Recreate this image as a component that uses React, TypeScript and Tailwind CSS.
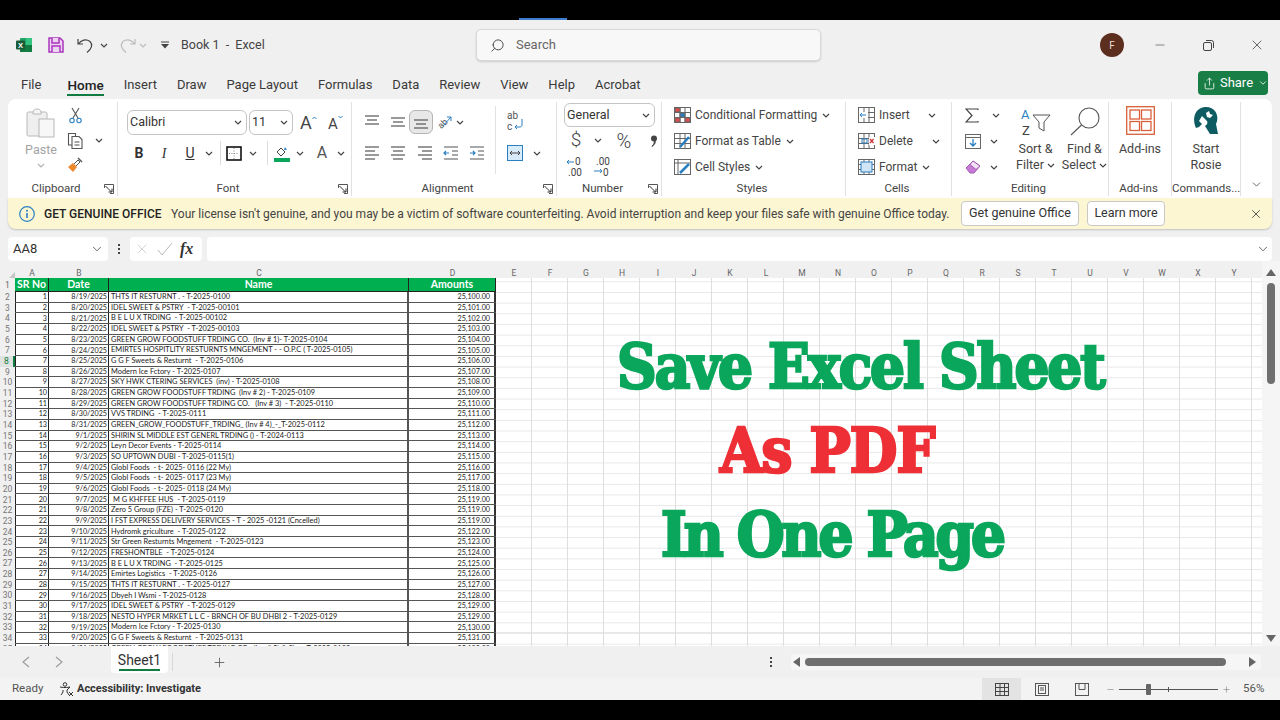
import type { ReactNode } from 'react';
import { ChevronDown, Minus, Plus, Search, Share, X } from 'lucide-react';

const TABS = ['Insert', 'Draw', 'Page Layout', 'Formulas', 'Data', 'Review', 'View', 'Help', 'Acrobat'];
const COLS = 'EFGHIJKLMNOPQRSTUVWXY'.split('');

const NAMES = [
  'THTS IT RESTURNT . - T-2025-0100',
  'IDEL SWEET & PSTRY  - T-2025-00101',
  'B E L U X TRDING  - T-2025-00102',
  'IDEL SWEET & PSTRY  - T-2025-00103',
  'GREEN GROW FOODSTUFF TRDING CO.  (Inv # 1)- T-2025-0104',
  'EMIRTES HOSPITLITY RESTURNTS MNGEMENT - - O.P.C ( T-2025-0105)',
  'G G F Sweets & Resturnt  - T-2025-0106',
  'Modern Ice Fctory - T-2025-0107',
  'SKY HWK CTERING SERVICES  (inv) - T-2025-0108',
  'GREEN GROW FOODSTUFF TRDING  (Inv # 2) - T-2025-0109',
  'GREEN GROW FOODSTUFF TRDING CO.   (Inv # 3)  - T-2025-0110',
  'VVS TRDING  - T-2025-0111',
  'GREEN_GROW_FOODSTUFF_TRDING_ (Inv # 4)_-_T-2025-0112',
  'SHIRIN SL MIDDLE EST GENERL TRDING () - T-2024-0113',
  'Leyn Decor Events - T-2025-0114',
  'SO UPTOWN DUBI - T-2025-0115(1)',
  'Globl Foods  - t- 2025- 0116 (22 My)',
  'Globl Foods  - t- 2025- 0117 (23 My)',
  'Globl Foods  - t- 2025- 0118 (24 My)',
  ' M G KHFFEE HUS  - T-2025-0119',
  'Zero 5 Group (FZE) - T-2025-0120',
  'I FST EXPRESS DELIVERY SERVICES - T - 2025 -0121 (Cncelled)',
  'Hydromk griculture  - T-2025-0122',
  'Str Green Resturnts Mngement  - T-2025-0123',
  'FRESHONTBLE  - T-2025-0124',
  'B E L U X TRDING  - T-2025-0125',
  'Emirtes Logistics  - T-2025-0126',
  'THTS IT RESTURNT . - T-2025-0127',
  'Dbyeh I Wsmi - T-2025-0128',
  'IDEL SWEET & PSTRY  - T-2025-0129',
  'NESTO HYPER MRKET L L C - BRNCH OF BU DHBI 2 - T-2025-0129',
  'Modern Ice Fctory - T-2025-0130',
  'G G F Sweets & Resturnt  - T-2025-0131',
  'GREEN GROW FOODSTUFF TRDING CO.  (Inv # 5) & Sim - T-2025-0132',
];

const AMOUNTS = [
  100, 101, 102, 103, 104, 105, 106, 107, 108, 109, 110, 111, 112, 113, 114, 115, 116, 117, 118,
  119, 119, 119, 122, 123, 124, 125, 126, 127, 128, 129, 129, 130, 131, 132,
];

const dateFor = (n: number) => (n <= 13 ? `8/${18 + n}/2025` : `9/${n - 13}/2025`);

function Chev({ className = '' }: { className?: string }) {
  return (
    <svg width="8" height="5" viewBox="0 0 8 5" className={`shrink-0 ${className}`} fill="none" stroke="#444" strokeWidth="1.2">
      <path d="M1 1l3 3 3-3" />
    </svg>
  );
}

function Launcher() {
  return (
    <svg width="10" height="10" viewBox="0 0 10 10" fill="none" stroke="#555" className="shrink-0">
      <path d="M.5 4V.5h9v9H6" />
      <path d="M1.5 2l6 6M8 4.5V8H4.5" stroke="#333" />
    </svg>
  );
}

function Group({
  label,
  launcher,
  className,
  children,
}: {
  label: string;
  launcher?: boolean;
  className: string;
  children: ReactNode;
}) {
  return (
    <div className={`flex h-full shrink-0 flex-col border-r border-[#e1e1e1] ${className}`}>
      <div className="min-h-0 flex-1">{children}</div>
      <div className="flex h-[14px] items-center pr-[3px] text-[11.5px] text-[#444]">
        <span className="flex-1 whitespace-nowrap text-center">{label}</span>
        {launcher && <Launcher />}
      </div>
    </div>
  );
}

function Slot({ className, children }: { className: string; children?: ReactNode }) {
  return <div className={`flex shrink-0 items-center justify-center ${className}`}>{children}</div>;
}

function Lines({ rows }: { rows: number[][] }) {
  return (
    <svg width="16" height="16" viewBox="0 0 16 16" stroke="#555" strokeWidth="1.2">
      {rows.map(([a, b, y]) => (
        <path key={y} d={`M${a} ${y}H${b}`} />
      ))}
    </svg>
  );
}

function StyleRow({ icon, text, slot }: { icon: ReactNode; text: string; slot?: ReactNode }) {
  return (
    <div className="flex h-[26px] items-center">
      <Slot className="w-[17px]">{icon}</Slot>
      <span className="ml-[4px] whitespace-nowrap text-[12px] text-[#444]">{text}</span>
      {slot ?? <Chev className="ml-[5px]" />}
    </div>
  );
}

function GridIcon({ children }: { children?: ReactNode }) {
  return (
    <svg width="17" height="16" viewBox="0 0 17 16" fill="none" stroke="#666" strokeWidth="1">
      <rect x=".5" y=".5" width="16" height="15" fill="#fff" />
      <path d="M.5 5.5h16M.5 10.5h16M6 .5v15M11 .5v15" />
      {children}
    </svg>
  );
}

function ExcelLogo() {
  return (
    <svg width="16" height="16" viewBox="0 0 16 16">
      <rect x="4" y="1" width="12" height="14" rx="1" fill="#21a366" />
      <rect x="10" y="1" width="6" height="7" fill="#33c481" />
      <rect x="4" y="8" width="12" height="7" fill="#107c41" />
      <rect x="0" y="3.5" width="9" height="9" rx="1" fill="#185c37" />
      <text x="4.5" y="10.8" fontSize="7.5" fontWeight="700" fill="#fff" textAnchor="middle" fontFamily="'Liberation Sans', sans-serif">
        X
      </text>
    </svg>
  );
}

function Clipboard() {
  return (
    <div className="flex w-[110px]">
      <div className="ml-[13px] flex w-[40px] flex-col items-center pt-[6px]">
        <svg width="30" height="30" viewBox="0 0 30 30" fill="none" stroke="#b8b8b8">
          <rect x="1" y="4" width="20" height="24" rx="1.5" fill="#efefef" />
          <path d="M7 4c0-2 2-3 4-3s4 1 4 3v2H7z" fill="#f5f5f5" />
          <rect x="13" y="11" width="15" height="18" fill="#f7f7f7" />
        </svg>
        <span className="mt-[3px] text-[12.5px] leading-[18px] text-[#a3a3a3]">Paste</span>
        <Chev className="mt-[4px] opacity-40" />
      </div>
      <div className="ml-[2px] flex flex-col">
        <div className="flex h-[26px] w-[24px] items-center justify-center">
          <svg width="13" height="17" viewBox="0 0 13 17" fill="none" stroke="#555" strokeWidth="1.1">
            <path d="M3 1l6 10M10 1L4 11" />
            <circle cx="3" cy="13.5" r="2.2" stroke="#2a7fc1" />
            <circle cx="10" cy="13.5" r="2.2" stroke="#2a7fc1" />
          </svg>
        </div>
        <div className="flex h-[24px] items-center">
          <div className="flex w-[24px] justify-center">
            <svg width="17" height="17" viewBox="0 0 17 17" fill="none" stroke="#555" strokeWidth="1.1">
              <path d="M5 13H1.5V1.5h7V4" />
              <path d="M5 4.5h7l3 3v9H5zM7.5 10h5M7.5 13h5" fill="#fff" />
            </svg>
          </div>
          <Chev className="ml-[8px]" />
        </div>
        <div className="flex h-[26px] w-[24px] items-center justify-center">
          <svg width="16" height="16" viewBox="0 0 16 16" fill="none">
            <path d="M1 10l5-4 4 4-4 5z" fill="#e88a2d" />
            <path d="M7 7l4-4 2 2-4 4" stroke="#555" />
            <path d="M11 1l4 4" stroke="#555" strokeWidth="1.5" />
          </svg>
        </div>
      </div>
    </div>
  );
}

function SelectBox({ className, text }: { className: string; text: string }) {
  return (
    <div className={`flex items-center justify-between rounded-[6px] border border-[#c4c4c4] bg-white pl-[2px] pr-[4px] ${className}`}>
      <span className="text-[12.5px] text-[#333]">{text}</span>
      <Chev />
    </div>
  );
}

function Font() {
  return (
    <div className="pl-[9px] pt-[8px]">
      <div className="flex h-[25px] items-center">
        <SelectBox className="h-[25px] w-[120px]" text="Calibri" />
        <SelectBox className="ml-[2px] h-[25px] w-[44px]" text="11" />
        <div className="ml-[7px] flex w-[17px] items-start">
          <span className="text-[18px] leading-[18px] text-[#444]">A</span>
          <svg width="5" height="4" viewBox="0 0 5 4" fill="none" stroke="#2a7fc1" className="mt-[2px] shrink-0">
            <path d="M.5 3L2.5 1l2 2" />
          </svg>
        </div>
        <div className="ml-[11px] flex w-[17px] items-start">
          <span className="mt-[2px] text-[15px] leading-[16px] text-[#444]">A</span>
          <svg width="5" height="4" viewBox="0 0 5 4" fill="none" stroke="#2a7fc1" className="mt-[1px] shrink-0">
            <path d="M.5 1l2 2 2-2" />
          </svg>
        </div>
      </div>
      <div className="mt-[5px] flex h-[26px] items-center text-[14px] text-[#333]">
        <Slot className="w-[24px] font-bold">B</Slot>
        <Slot className="w-[26px] font-['Liberation_Serif'] italic">I</Slot>
        <Slot className="w-[26px]"><span className="underline">U</span></Slot>
        <Slot className="w-[12px]"><Chev /></Slot>
        <Slot className="w-[10px]"><div className="h-[24px] w-px bg-[#dcdcdc]" /></Slot>
        <Slot className="w-[18px]">
          <svg width="16" height="15" viewBox="0 0 16 15" fill="none">
            <rect x="1" y="1" width="14" height="13" stroke="#111" strokeWidth="1.6" />
            <path d="M8 2v11M3 7.5h10" stroke="#888" strokeDasharray="1 1.5" />
          </svg>
        </Slot>
        <Slot className="w-[20px]"><Chev /></Slot>
        <Slot className="w-[8px]"><div className="h-[24px] w-px bg-[#dcdcdc]" /></Slot>
        <Slot className="w-[22px]">
          <svg width="16" height="17" viewBox="0 0 16 17" fill="none">
            <path d="M3 7l4-4 4 4-4 4z" stroke="#444" fill="#fff" />
            <path d="M11 2l2 3h-3z" fill="#2a7fc1" />
            <rect y="13" width="16" height="4" fill="#0aa65b" />
          </svg>
        </Slot>
        <Slot className="w-[14px]"><Chev /></Slot>
        <Slot className="w-[30px]"><span className="text-[16px] text-[#555]">A</span></Slot>
        <Slot className="w-[8px]"><Chev /></Slot>
      </div>
    </div>
  );
}

function Alignment() {
  return (
    <div className="flex pt-[8px]">
      <div className="ml-[12px] w-[130px]">
        <div className="flex h-[24px] items-center">
          <Slot className="w-[16px]"><Lines rows={[[1, 15, 2], [3, 13, 6], [1, 15, 10]]} /></Slot>
          <Slot className="ml-[10px] w-[16px]"><Lines rows={[[1, 15, 4], [3, 13, 8], [1, 15, 12]]} /></Slot>
          <Slot className="ml-[3px] h-[24px] w-[24px] rounded-[6px] border border-[#b5b5b5] bg-[#e8e8e8]">
            <Lines rows={[[1, 15, 6], [3, 13, 10], [1, 15, 14]]} />
          </Slot>
          <Slot className="ml-[2px] w-[18px]">
            <svg width="17" height="16" viewBox="0 0 17 16" fill="none">
              <text x="1" y="13" fontSize="9" fill="#555" transform="rotate(-45 6 9)" fontFamily="Roboto, sans-serif">ab</text>
              <path d="M7 12L15 3M11 3h4v4" stroke="#2a7fc1" />
            </svg>
          </Slot>
          <Chev className="ml-[3px]" />
        </div>
        <div className="mt-[7px] flex h-[24px] items-center">
          <Slot className="w-[16px]"><Lines rows={[[1, 15, 2], [1, 11, 6], [1, 15, 10], [1, 11, 14]]} /></Slot>
          <Slot className="ml-[10px] w-[16px]"><Lines rows={[[1, 15, 2], [3, 13, 6], [1, 15, 10], [3, 13, 14]]} /></Slot>
          <Slot className="ml-[11px] w-[16px]"><Lines rows={[[1, 15, 2], [5, 15, 6], [1, 15, 10], [5, 15, 14]]} /></Slot>
          <Slot className="ml-[10px] w-[16px]">
            <svg width="16" height="16" viewBox="0 0 16 16" fill="none" stroke="#555" strokeWidth="1.2">
              <path d="M1 2h14M9 6h6M9 10h6M1 14h14" />
              <path d="M6 8H1M3 6L1 8l2 2" stroke="#2a7fc1" />
            </svg>
          </Slot>
          <Slot className="ml-[10px] w-[16px]">
            <svg width="16" height="16" viewBox="0 0 16 16" fill="none" stroke="#555" strokeWidth="1.2">
              <path d="M1 2h14M9 6h6M9 10h6M1 14h14" />
              <path d="M1 8h5M4 6l2 2-2 2" stroke="#2a7fc1" />
            </svg>
          </Slot>
        </div>
      </div>
      <div className="-mt-[4px] ml-[1px] h-[68px] w-px bg-[#e1e1e1]" />
      <div className="ml-[11px]">
        <div className="flex h-[24px] items-start justify-start">
          <svg width="17" height="22" viewBox="0 0 17 22" fill="none">
            <text x="0" y="9" fontSize="10" fill="#555" fontFamily="Roboto, sans-serif">ab</text>
            <text x="0" y="20" fontSize="10" fill="#555" fontFamily="Roboto, sans-serif">c</text>
            <path d="M15 9v6c0 1-1 2-2 2H8M10 15l-2 2 2 2" stroke="#2a7fc1" />
          </svg>
        </div>
        <div className="mt-[7px] flex h-[24px] items-center">
          <svg width="16" height="16" viewBox="0 0 16 16" fill="none">
            <rect x=".5" y=".5" width="15" height="15" stroke="#2a7fc1" fill="#d8ebf8" />
            <path d="M3 8h10M5 6L3 8l2 2M11 6l2 2-2 2" stroke="#444" />
          </svg>
          <Chev className="ml-[10px]" />
        </div>
      </div>
    </div>
  );
}

function NumberGroup() {
  return (
    <div className="pl-[7px] pt-px">
      <SelectBox className="h-[24px] w-[91px]" text="General" />
      <div className="flex h-[27px] items-center text-[#444]">
        <Slot className="ml-[4px] w-[16px] text-[19px] font-light">$</Slot>
        <Chev className="ml-[10px]" />
        <Slot className="ml-[8px] w-[28px] text-[20px] font-light">%</Slot>
        <svg width="8" height="12" viewBox="0 0 8 12" fill="#444" className="ml-[12px]">
          <circle cx="4" cy="3.5" r="3" />
          <path d="M5 5c1 3-1 5-3 6.5C4 9 5 7 4 5.5z" stroke="#444" />
        </svg>
      </div>
      <div className="flex h-[25px] items-center">
        <svg width="20" height="23" viewBox="0 0 20 23" fill="none" className="ml-[1px]">
          <text x="10" y="10" fontSize="10" fill="#444" fontFamily="Roboto, sans-serif">0</text>
          <text x="3" y="21" fontSize="10" fill="#444" fontFamily="Roboto, sans-serif">.00</text>
          <path d="M9 7H2M4 5L2 7l2 2" stroke="#2a7fc1" />
        </svg>
        <svg width="20" height="23" viewBox="0 0 20 23" fill="none" className="ml-[8px]">
          <text x="3" y="10" fontSize="10" fill="#444" fontFamily="Roboto, sans-serif">.00</text>
          <text x="10" y="21" fontSize="10" fill="#444" fontFamily="Roboto, sans-serif">0</text>
          <path d="M1 16h8M7 14l2 2-2 2" stroke="#2a7fc1" />
        </svg>
      </div>
    </div>
  );
}

function Styles() {
  return (
    <div className="pl-[12px]">
      <StyleRow
        text="Conditional Formatting"
        icon={
          <GridIcon>
            <rect x="1" y="1" width="5" height="4" fill="#e34b4b" />
            <rect x="6" y="6" width="5" height="4" fill="#2a7fc1" />
            <rect x="1" y="11" width="5" height="4" fill="#e34b4b" />
            <rect x="11" y="11" width="5" height="4" fill="#e34b4b" />
          </GridIcon>
        }
      />
      <StyleRow
        text="Format as Table"
        icon={
          <GridIcon>
            <path d="M6 14L15 4" stroke="#2a7fc1" strokeWidth="2.5" />
          </GridIcon>
        }
      />
      <StyleRow
        text="Cell Styles"
        icon={
          <svg width="17" height="16" viewBox="0 0 17 16" fill="none" stroke="#666">
            <rect x=".5" y=".5" width="16" height="15" fill="#fff" />
            <path d="M.5 4h16M4 .5v15" />
            <path d="M6 14l9-9" stroke="#2a7fc1" strokeWidth="2.5" />
          </svg>
        }
      />
    </div>
  );
}

function Cells() {
  return (
    <div className="pl-[12px]">
      <StyleRow
        text="Insert"
        slot={<Chev className="ml-[18px]" />}
        icon={
          <GridIcon>
            <rect x="1" y="5" width="9" height="6" fill="#fff" stroke="none" />
            <path d="M8 8H2M4 6L2 8l2 2" stroke="#2a7fc1" />
          </GridIcon>
        }
      />
      <StyleRow
        text="Delete"
        slot={<Chev className="ml-[19px]" />}
        icon={
          <GridIcon>
            <rect x="11" y="4" width="6" height="8" fill="#fff" stroke="none" />
            <path d="M12 6l3.5 4M15.5 6L12 10" stroke="#d13438" strokeWidth="1.3" />
            <rect x="4" y="6" width="5" height="4" stroke="#2a7fc1" />
          </GridIcon>
        }
      />
      <StyleRow
        text="Format"
        icon={
          <GridIcon>
            <rect x="3" y="3" width="11" height="10" fill="#cfe4f5" stroke="#2a7fc1" />
          </GridIcon>
        }
      />
    </div>
  );
}

function Editing() {
  return (
    <div className="flex">
      <div className="ml-[13px] flex w-[46px] flex-col">
        <div className="flex h-[26px] items-center">
          <svg width="14" height="15" viewBox="0 0 14 15" fill="none" stroke="#444" strokeWidth="1.2">
            <path d="M13 2V1H1l6 6.5L1 14h12v-1" />
          </svg>
          <Chev className="ml-[13px]" />
        </div>
        <div className="flex h-[26px] items-center">
          <svg width="16" height="15" viewBox="0 0 16 15" fill="none" stroke="#666">
            <rect x=".5" y=".5" width="15" height="14" fill="#fff" />
            <path d="M.5 3.5h15" />
            <path d="M8 5v7M5 9l3 3 3-3" stroke="#2a7fc1" strokeWidth="1.3" />
          </svg>
          <Chev className="ml-[9px]" />
        </div>
        <div className="flex h-[26px] items-center">
          <svg width="16" height="14" viewBox="0 0 16 14">
            <path d="M1 8l7-7 7 5-6 7H5z" fill="#c77ad5" stroke="#a35ab3" />
            <path d="M5 4.5l6 5 4-3.5-7-5z" fill="#f3e2f6" stroke="#a35ab3" />
          </svg>
          <Chev className="ml-[9px]" />
        </div>
      </div>
      <div className="ml-[1px] flex w-[47px] flex-col items-center pt-[4px] text-[12.5px] leading-[16px] text-[#444]">
        <svg width="32" height="34" viewBox="0 0 32 34" fill="none" className="-mb-[2px]">
          <text x="1" y="13" fontSize="13" fill="#2a7fc1" fontFamily="Roboto, sans-serif">A</text>
          <text x="2" y="29" fontSize="13" fill="#444" fontFamily="Roboto, sans-serif">Z</text>
          <path d="M13 9h17l-6 7v9l-5-3v-6z" stroke="#555" />
        </svg>
        <span className="mt-[3px] whitespace-nowrap">Sort &amp;</span>
        <span className="flex items-center whitespace-nowrap">Filter<Chev className="ml-[3px]" /></span>
      </div>
      <div className="ml-[2px] flex w-[47px] flex-col items-center pt-[4px] text-[12.5px] leading-[16px] text-[#444]">
        <svg width="32" height="32" viewBox="0 0 32 32" fill="none" stroke="#555" strokeWidth="1.1">
          <circle cx="20" cy="12" r="10" />
          <path d="M12.5 19L2 29" />
        </svg>
        <span className="mt-[3px] whitespace-nowrap">Find &amp;</span>
        <span className="flex items-center whitespace-nowrap">Select<Chev className="ml-[3px]" /></span>
      </div>
    </div>
  );
}

function AddIns() {
  return (
    <div className="flex flex-col items-center pt-[4px] text-[12.5px] leading-[16px] text-[#444]">
      <svg width="29" height="29" viewBox="0 0 29 29" fill="none" stroke="#d9603a" strokeWidth="1.3">
        <rect x=".7" y=".7" width="27.6" height="27.6" />
        <rect x="4" y="4" width="9.5" height="9" />
        <rect x="15.5" y="4" width="9.5" height="9" />
        <rect x="4" y="15.5" width="9.5" height="9" />
        <rect x="15.5" y="15.5" width="9.5" height="9" />
      </svg>
      <span className="mt-[6px]">Add-ins</span>
    </div>
  );
}

function Rosie() {
  return (
    <div className="flex flex-col items-center pt-[4px] text-[12.5px] leading-[16px] text-[#444]">
      <svg width="26" height="29" viewBox="0 0 26 29">
        <path
          d="M3 22C-1 14 1 2 12 1c10-1 15 9 11 17l2 10h-8l-5-8c2-1 3-3 2-5l-5-5-3 5 3 3-3 3z"
          fill="#0e5c62"
        />
        <path d="M13 7l3-2 1 3 3 1-3 3-3-1z" fill="#fff" />
      </svg>
      <span className="mt-[6px]">Start</span>
      <span>Rosie</span>
    </div>
  );
}

function Sheet() {
  return (
    <div className="flex min-h-0 flex-1">
      <div className="mt-[7px] flex w-[1262px] shrink-0 flex-col overflow-hidden">
        <div className="flex h-[10px] shrink-0 text-center text-[8.5px] leading-[10px] text-[#666]">
          <div className="flex w-[15px] items-end justify-end">
            <div className="h-0 w-0 border-b-[6px] border-l-[6px] border-b-[#c4c4c4] border-l-transparent" />
          </div>
          <div className="w-[34px]">A</div>
          <div className="w-[60px]">B</div>
          <div className="w-[300px]">C</div>
          <div className="w-[87px]">D</div>
          {COLS.map(c => (
            <div key={c} className="w-[36px] shrink-0">{c}</div>
          ))}
        </div>
        <div className="flex min-h-0 flex-1 bg-white">
          <div className="w-[496px] shrink-0 overflow-hidden">
            <div className="flex h-[14px]">
              <div className="flex w-[15px] items-center justify-center bg-[#f0f0f0] text-[8.5px] text-[#666]">1</div>
              <div className="flex flex-1 border-b border-[#222] bg-[#00b050] font-['Lato'] text-[10.5px] font-bold text-white">
                <div className="flex w-[34px] items-center justify-center whitespace-nowrap border-r border-[#222]">SR No</div>
                <div className="flex w-[60px] items-center justify-center border-r border-[#222]">Date</div>
                <div className="flex w-[300px] items-center justify-center border-r border-[#222]">Name</div>
                <div className="flex w-[87px] items-center justify-center border-r border-[#222]">Amounts</div>
              </div>
            </div>
            {NAMES.map((name, i) => (
              <div key={i} className="flex h-[10.66px]">
                <div
                  className={`flex w-[15px] items-center justify-center text-[8.5px] leading-none ${
                    i === 6 ? 'border-r-2 border-[#107c41] bg-[#dfe3df] text-[#107c41]' : 'bg-[#f0f0f0] text-[#777]'
                  }`}
                >
                  {i + 2}
                </div>
                <div className="flex flex-1 border-b border-[#555] font-['Lato'] text-[7.4px] leading-none text-[#222]">
                  <div className="flex w-[34px] items-center justify-end border-x border-[#222] pr-px text-[7.2px]">{i + 1}</div>
                  <div className="flex w-[60px] items-center justify-end border-r border-[#222] pr-px text-[7.2px]">{dateFor(i + 1)}</div>
                  <div className="flex w-[300px] items-center overflow-hidden whitespace-pre border-r-2 border-[#555] pl-[2px]">{name}</div>
                  <div className="flex w-[87px] items-center justify-end border-r-2 border-[#333] pr-[4px] text-[7.2px]">{`25,${AMOUNTS[i]}.00`}</div>
                </div>
              </div>
            ))}
          </div>
          <div className="flex-1 whitespace-nowrap bg-[linear-gradient(to_right,#dedede_1px,transparent_1px),linear-gradient(to_bottom,#e8e8e8_1px,transparent_1px)] pt-[47px] font-['DejaVu_Serif'] text-[61px] font-bold leading-[84px] [background-position:35px_3.34px] [background-size:36px_10.66px] [font-stretch:condensed]">
            <div className="ml-[121px] tracking-[-2px] text-[#0aa65b] [-webkit-text-stroke:2.5px_#0aa65b]">Save Excel Sheet</div>
            <div className="ml-[224px] tracking-[-1px] text-[#ee2f36] [-webkit-text-stroke:2.5px_#ee2f36]">As PDF</div>
            <div className="ml-[165px] tracking-[-3px] text-[#0aa65b] [-webkit-text-stroke:2.5px_#0aa65b]">In One Page</div>
          </div>
        </div>
      </div>
      <div className="flex flex-1 flex-col items-center justify-between bg-[#f5f5f5] pb-[4px] pt-[8px]">
        <div className="flex flex-col items-center">
          <div className="h-0 w-0 border-x-[5px] border-b-[7px] border-x-transparent border-b-[#666]" />
          <div className="mt-[7px] h-[101px] w-[8px] rounded-full bg-[#6f6f6f]" />
        </div>
        <div className="h-0 w-0 border-x-[5px] border-t-[7px] border-x-transparent border-t-[#666]" />
      </div>
    </div>
  );
}

export default function App() {
  return (
    <div className="flex h-[720px] w-[1280px] flex-col overflow-hidden bg-black font-['Roboto',sans-serif]">
      <div className="ml-[519px] mt-[18px] h-[2px] w-[48px] shrink-0 bg-[#3f7fd0]" />
      <div className="flex h-[680px] w-full shrink-0 flex-col bg-[#f0f0f0]">
        {/* title bar */}
        <div className="flex h-[48px] shrink-0 items-center pt-[2px]">
          <div className="flex w-[476px] items-center pl-[16px]">
            <ExcelLogo />
            <svg width="16" height="16" viewBox="0 0 16 16" fill="#eed2f2" stroke="#a936bd" strokeWidth="1.5" className="ml-[16px]">
              <path d="M1 1h11l3 3v11H1z" />
              <path d="M4 1v5h7V1M4 15v-6h8v6" />
            </svg>
            <svg width="17" height="17" viewBox="0 0 17 17" fill="none" stroke="#444" strokeWidth="1.2" className="ml-[13px]">
              <path d="M1 2v5h5M1.5 7C4 3 9 1.5 13 4.5c3 3 2 7-3 11" />
            </svg>
            <Chev className="ml-[6px]" />
            <svg width="17" height="17" viewBox="0 0 17 17" fill="none" stroke="#bbb" strokeWidth="1.2" className="ml-[11px]">
              <path d="M16 2v5h-5M15.5 7C13 3 8 1.5 4 4.5c-3 3-2 7 3 11" />
            </svg>
            <Chev className="ml-[3px] opacity-30" />
            <svg width="10" height="8" viewBox="0 0 10 8" className="ml-[13px]" fill="#444">
              <path d="M1 .5h8v1H1zM1 3h8L5 7.5z" />
            </svg>
            <span className="ml-[11px] whitespace-pre text-[12.5px] text-[#444]">Book 1  -  Excel</span>
          </div>
          <div className="flex h-[32px] w-[345px] items-center rounded-[5px] border border-[#d8d8d8] bg-[#f8f8f8] pl-[13px] shadow-[0_1px_2px_rgba(0,0,0,0.15)]">
            <Search className="h-[15px] w-[15px] -scale-x-100 text-[#444]" strokeWidth={1.5} />
            <span className="ml-[11px] text-[13px] text-[#666]">Search</span>
          </div>
          <div className="flex flex-1 items-center pl-[279px]">
            <div className="flex h-[24px] w-[24px] items-center justify-center rounded-full bg-[#5c2e1e] text-[10px] text-[#e8dcd8]">F</div>
            <Minus className="ml-[29px] h-[14px] w-[14px] text-[#555]" strokeWidth={1.2} />
            <svg width="11" height="11" viewBox="0 0 11 11" fill="none" stroke="#444" className="ml-[36px]">
              <rect x=".5" y="2.5" width="8" height="8" rx="1.5" />
              <path d="M3 .5h5.5a2 2 0 012 2V8" />
            </svg>
            <X className="ml-[35px] h-[16px] w-[16px] text-[#444]" strokeWidth={1.2} />
          </div>
        </div>

        {/* tabs */}
        <div className="flex h-[31px] shrink-0 items-start pl-[21px]">
          <div className="mt-[7px] flex items-start text-[13px] leading-[20px] text-[#3a3a3a]">
            <span>File</span>
            <span className="relative ml-[26px] text-[13.5px] font-medium text-[#222]">
              Home
              <span className="absolute -bottom-[1px] left-0 h-[2px] w-full bg-[#107c41]" />
            </span>
            {TABS.map(t => (
              <span key={t} className="ml-[20px] whitespace-nowrap">{t}</span>
            ))}
          </div>
          <div className="ml-auto mr-[12px] mt-[3px] flex h-[24px] w-[70px] items-center rounded-[4px] bg-[#197d46] pl-[5px] text-[13px] text-white">
            <Share className="h-[13px] w-[13px]" strokeWidth={1.5} />
            <span className="ml-[4px]">Share</span>
            <ChevronDown className="ml-[5px] h-[10px] w-[10px]" strokeWidth={2} />
          </div>
        </div>

        {/* ribbon */}
        <div className="mx-[8px] flex h-[99px] shrink-0 rounded-t-[8px] bg-white pb-[2px] pt-[3px]">
          <Group label="Clipboard" launcher className="w-[110px]"><Clipboard /></Group>
          <Group label="Font" launcher className="w-[234px]"><Font /></Group>
          <Group label="Alignment" launcher className="w-[205px]"><Alignment /></Group>
          <Group label="Number" launcher className="w-[105px]"><NumberGroup /></Group>
          <Group label="Styles" className="w-[184px]"><Styles /></Group>
          <Group label="Cells" className="w-[106px]"><Cells /></Group>
          <Group label="Editing" className="w-[157px]"><Editing /></Group>
          <Group label="Add-ins" className="w-[63px]"><AddIns /></Group>
          <Group label="Commands..." className="w-[69px]"><Rosie /></Group>
          <div className="flex flex-1 items-end justify-center pb-[5px]">
            <ChevronDown className="h-[13px] w-[13px] text-[#444]" strokeWidth={1.5} />
          </div>
        </div>

        {/* license banner */}
        <div className="mx-[8px] flex h-[31px] shrink-0 items-center rounded-b-[8px] bg-[#fdf6d3] pl-[11px] shadow-[0_1px_2px_rgba(0,0,0,0.2)]">
          <svg width="16" height="16" viewBox="0 0 16 16" fill="none" className="shrink-0">
            <circle cx="8" cy="8" r="7.3" stroke="#2a7fc1" strokeWidth="1.2" />
            <circle cx="8" cy="4.8" r="1" fill="#2a7fc1" />
            <path d="M8 7v5" stroke="#2a7fc1" strokeWidth="1.6" />
          </svg>
          <span className="ml-[9px] w-[118px] shrink-0 whitespace-nowrap text-[12px] font-medium text-[#222]">GET GENUINE OFFICE</span>
          <span className="ml-[9px] w-[780px] shrink-0 whitespace-nowrap text-[12px] text-[#444]">
            Your license isn't genuine, and you may be a victim of software counterfeiting. Avoid interruption and keep your files safe with genuine Office today.
          </span>
          <div className="ml-[10px] flex h-[25px] w-[118px] shrink-0 items-center justify-center rounded-[4px] border border-[#c8c8c8] bg-white text-[12.5px] text-[#333]">
            Get genuine Office
          </div>
          <div className="ml-[8px] flex h-[25px] w-[78px] shrink-0 items-center justify-center rounded-[4px] border border-[#c8c8c8] bg-white text-[12.5px] text-[#333]">
            Learn more
          </div>
          <X className="ml-auto mr-[9px] h-[14px] w-[14px] shrink-0 text-[#444]" strokeWidth={1.5} />
        </div>

        {/* formula bar */}
        <div className="mx-[8px] mt-[8px] flex h-[24px] shrink-0 items-stretch">
          <div className="flex w-[100px] items-center justify-between rounded-[4px] bg-white pl-[5px] pr-[4px] text-[13px] text-[#333]">
            AA8
            <ChevronDown className="h-[14px] w-[14px] text-[#555]" strokeWidth={1.5} />
          </div>
          <div className="flex w-[22px] flex-col items-center justify-center gap-[2px]">
            <div className="h-[2px] w-[2px] bg-[#444]" />
            <div className="h-[2px] w-[2px] bg-[#444]" />
            <div className="h-[2px] w-[2px] bg-[#444]" />
          </div>
          <div className="flex w-[72px] items-center rounded-[4px] bg-white pl-[4px] text-[#bbb]">
            <X className="h-[16px] w-[16px]" strokeWidth={1} />
            <svg width="16" height="14" viewBox="0 0 16 14" fill="none" stroke="#bbb" className="ml-[7px]">
              <path d="M1 8l4 5L15 1" />
            </svg>
            <span className="ml-[7px] font-['Liberation_Serif'] text-[16px] font-bold italic text-[#333]">fx</span>
          </div>
          <div className="ml-[5px] flex flex-1 items-center justify-end rounded-[4px] bg-white pr-[2px]">
            <ChevronDown className="h-[14px] w-[14px] text-[#555]" strokeWidth={1.5} />
          </div>
        </div>

        <Sheet />

        {/* sheet tabs */}
        <div className="flex h-[32px] shrink-0 items-center">
          <svg width="8" height="12" viewBox="0 0 8 12" fill="none" stroke="#999" strokeWidth="1.1" className="ml-[22px]">
            <path d="M7 1L1 6l6 5" />
          </svg>
          <svg width="8" height="12" viewBox="0 0 8 12" fill="none" stroke="#999" strokeWidth="1.1" className="ml-[25px]">
            <path d="M1 1l6 5-6 5" />
          </svg>
          <div className="relative ml-[48px] flex h-[27px] w-[57px] items-center justify-center self-start rounded-b-[4px] bg-white pt-[1px] text-[14px] text-[#333]">
            Sheet1
            <span className="absolute bottom-[2px] left-[8px] right-[8px] h-[2px] bg-[#107c41]" />
          </div>
          <div className="ml-[4px] h-[18px] w-px bg-[#d8d8d8]" />
          <Plus className="ml-[39px] h-[15px] w-[15px] text-[#555]" strokeWidth={1.3} />
          <div className="ml-[543px] flex flex-col gap-[2px]">
            <div className="h-[2px] w-[2px] bg-[#444]" />
            <div className="h-[2px] w-[2px] bg-[#444]" />
            <div className="h-[2px] w-[2px] bg-[#444]" />
          </div>
          <div className="ml-[19px] flex h-[16px] w-[470px] items-center rounded-[3px] bg-[#f6f6f6]">
            <div className="ml-[2px] h-0 w-0 border-y-[5px] border-r-[7px] border-y-transparent border-r-[#666]" />
            <div className="ml-[5px] h-[8px] w-[421px] rounded-full bg-[#6f6f6f]" />
            <div className="ml-[23px] h-0 w-0 border-y-[5px] border-l-[7px] border-y-transparent border-l-[#666]" />
          </div>
        </div>

        {/* status bar */}
        <div className="flex h-[22px] shrink-0 items-center bg-[#f3f3f3] pl-[12px] text-[11.5px] text-[#555]">
          <span className="w-[30px]">Ready</span>
          <svg width="15" height="15" viewBox="0 0 15 15" fill="none" stroke="#333" className="ml-[17px]">
            <circle cx="6" cy="2.5" r="1.8" />
            <path d="M1 5l3.5.5h3L11 5 8 8v2l2 3M4 8v2l-2 3" />
            <path d="M10 10l4 4M14 10l-4 4" />
          </svg>
          <span className="ml-[3px] whitespace-nowrap text-[11px] font-bold text-[#333]">Accessibility: Investigate</span>
          <div className="ml-auto flex h-full items-center">
            <div className="flex h-full w-[39px] items-center justify-center bg-[#e3e3e3]">
              <svg width="14" height="13" viewBox="0 0 14 13" fill="none" stroke="#444">
                <rect x=".5" y=".5" width="13" height="12" />
                <path d="M.5 4.5h13M.5 8.5h13M5 .5v12M9.5 .5v12" />
              </svg>
            </div>
            <div className="flex w-[41px] justify-center">
              <svg width="14" height="13" viewBox="0 0 14 13" fill="none" stroke="#555">
                <rect x=".5" y=".5" width="13" height="12" />
                <rect x="3.5" y="2.5" width="7" height="8" />
                <path d="M5 5h4M5 7h4" />
              </svg>
            </div>
            <div className="flex w-[39px] justify-center">
              <svg width="14" height="13" viewBox="0 0 14 13" fill="none" stroke="#555">
                <rect x=".5" y=".5" width="13" height="12" />
                <path d="M4 .5v6h6v-6" />
              </svg>
            </div>
            <Minus className="ml-[5px] h-[9px] w-[9px] text-[#777]" strokeWidth={1.5} />
            <div className="ml-[4px] flex w-[99px] items-center">
              <div className="h-px w-[27px] bg-[#555]" />
              <div className="h-[11px] w-[5px] rounded-[1px] bg-[#666]" />
              <div className="h-px w-[17px] bg-[#555]" />
              <div className="h-[5px] w-px bg-[#555]" />
              <div className="h-px flex-1 bg-[#555]" />
            </div>
            <Plus className="ml-[4px] h-[9px] w-[9px] text-[#777]" strokeWidth={1.5} />
            <span className="ml-[12px] w-[37px] text-[11.5px]">56%</span>
          </div>
        </div>
      </div>
    </div>
  );
}
